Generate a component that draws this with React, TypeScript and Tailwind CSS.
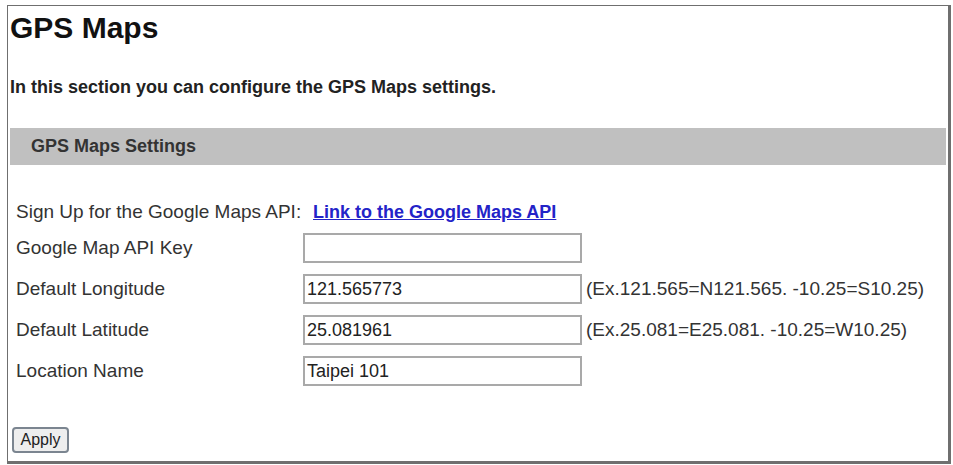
import React from 'react';

// GPS Maps settings page (router admin style)
const rows = [
  { label: 'Google Map API Key', value: '', hint: '' },
  { label: 'Default Longitude', value: '121.565773', hint: '(Ex.121.565=N121.565. -10.25=S10.25)' },
  { label: 'Default Latitude', value: '25.081961', hint: '(Ex.25.081=E25.081. -10.25=W10.25)' },
  { label: 'Location Name', value: 'Taipei 101', hint: '' },
];

export default function App() {
  return (
    <div className="w-[953px] h-[465px] bg-white pl-[7px] pt-[5px] font-['Liberation_Sans',Arial,sans-serif]">
      <div className="w-[944px] h-[459px] border-l border-t border-r-[3px] border-b-[3px] border-[#6f6f6f] flex flex-col">
        {/* Header */}
        <h1 className="mt-[5px] ml-[2px] text-[30px] leading-[34px] font-bold text-[#111]">GPS Maps</h1>
        <p className="mt-[31px] ml-[2px] text-[18px] leading-[22px] font-bold text-[#222]">
          In this section you can configure the GPS Maps settings.
        </p>

        {/* Section bar */}
        <div className="mt-[30px] mx-[2px] h-[37px] bg-[#c0c0c0] flex items-center pl-[21px]">
          <span className="text-[18px] font-bold text-[#333]">GPS Maps Settings</span>
        </div>

        {/* Sign up row */}
        <div className="mt-[35px] pl-[8px] flex items-center h-[24px]">
          <span className="w-[287px] text-[19px] text-[#333]">Sign Up for the Google Maps API:</span>
          <a href="#" className="ml-[10px] text-[18px] font-bold text-[#2323c8] underline">
            Link to the Google Maps API
          </a>
        </div>

        {/* Inputs */}
        <div className="mt-[9px] flex flex-col gap-[11px]">
          {rows.map((row) => (
            <div key={row.label} className="pl-[8px] flex items-center h-[30px]">
              <span className="w-[287px] text-[19px] text-[#333]">{row.label}</span>
              <input
                type="text"
                defaultValue={row.value}
                className="w-[279px] h-[30px] border-2 border-[#a9a9a9] px-[2px] text-[18px] text-[#222] bg-white outline-none"
              />
              {row.hint && <span className="ml-[4px] text-[19px] text-[#333]">{row.hint}</span>}
            </div>
          ))}
        </div>

        {/* Apply */}
        <div className="mt-[41px] ml-[4px]">
          <button className="w-[57px] h-[26px] rounded-[4px] border-2 border-[#7b8590] bg-[#eeeeee] text-[16px] text-[#222] flex items-center justify-center">
            Apply
          </button>
        </div>
      </div>
    </div>
  );
}
